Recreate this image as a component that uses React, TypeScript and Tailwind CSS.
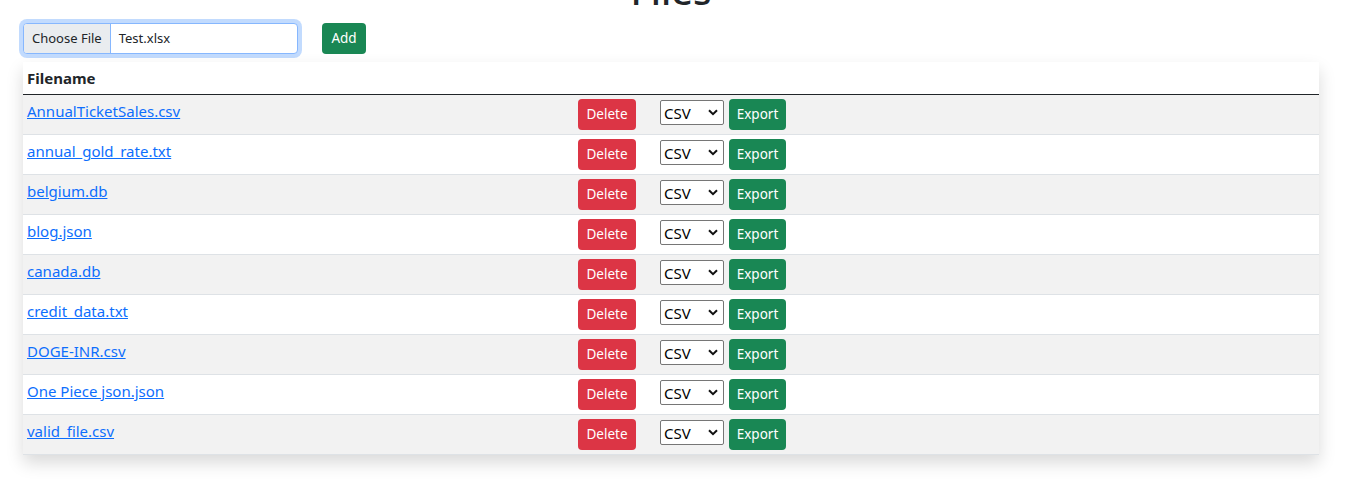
const files = [
  "AnnualTicketSales.csv",
  "annual_gold_rate.txt",
  "belgium.db",
  "blog.json",
  "canada.db",
  "credit_data.txt",
  "DOGE-INR.csv",
  "One Piece json.json",
  "valid_file.csv",
];

function Chevron() {
  return (
    <svg width="10" height="7" viewBox="0 0 10 7" className="pointer-events-none absolute right-[6px] top-[9px]">
      <path d="M1 1.2 L5 5.2 L9 1.2" fill="none" stroke="#111" strokeWidth="2" />
    </svg>
  );
}

function FileRow({ name, striped }: { name: string; striped: boolean }) {
  return (
    <tr className={`border-b border-[#dee2e6] ${striped ? "bg-[#f2f2f2]" : "bg-white"}`}>
      <td className="p-1 align-top">
        <a href="#" className="text-[15px] leading-6 text-[#0d6efd] underline">
          {name}
        </a>
      </td>
      <td className="p-1 align-top">
        <button className="h-[31px] w-[58px] rounded-[4px] bg-[#dc3545] text-[13.5px] text-white">Delete</button>
      </td>
      <td className="p-1 align-top">
        <div className="flex items-start gap-[5px]">
          <div className="relative mt-[1px]">
            <select className="h-[25px] w-[64px] appearance-none rounded-[2px] border border-[#767676] bg-white pl-[3px] text-[15px] leading-5 text-black">
              <option>CSV</option>
              <option>JSON</option>
              <option>XLSX</option>
            </select>
            <Chevron />
          </div>
          <button className="h-[31px] w-[57px] rounded-[4px] bg-[#198754] text-[13.5px] text-white">Export</button>
        </div>
      </td>
    </tr>
  );
}

export default function App() {
  return (
    <div className="h-[499px] overflow-hidden bg-white text-[#212529]" style={{ fontFamily: '"Noto Sans", "Open Sans", sans-serif' }}>
      <div className="ml-[23px] w-[1296px]">
        <h1 className="-mt-[34px] text-center text-[38px] font-medium leading-[48px]">Files</h1>

        <div className="mt-[9px] flex items-center">
          <div className="flex h-[31px] w-[275px] overflow-hidden rounded-[4px] border border-[#86b7fe] bg-white text-[13px] shadow-[0_0_0_4px_rgba(13,110,253,0.25)]">
            <span className="flex items-center border-r border-[#86b7fe] bg-[#e9ecef] px-2">Choose File</span>
            <span className="flex items-center pl-2">Test.xlsx</span>
          </div>
          <button className="ml-[24px] h-[31px] w-[44px] rounded-[4px] bg-[#198754] text-[13.5px] text-white">Add</button>
        </div>

        <div className="mt-[8px] bg-white shadow-[0_8px_16px_rgba(0,0,0,0.15)]">
          <table className="w-full table-fixed border-collapse">
            <colgroup>
              <col className="w-[551px]" />
              <col className="w-[82px]" />
              <col />
            </colgroup>
            <thead>
              <tr className="border-b border-[#212529]">
                <th className="p-1 text-left text-[15px] font-bold leading-6">Filename</th>
                <th className="p-1"></th>
                <th className="p-1"></th>
              </tr>
            </thead>
            <tbody>
              {files.map((f, i) => (
                <FileRow key={f} name={f} striped={i % 2 === 0} />
              ))}
            </tbody>
          </table>
        </div>
      </div>
    </div>
  );
}
